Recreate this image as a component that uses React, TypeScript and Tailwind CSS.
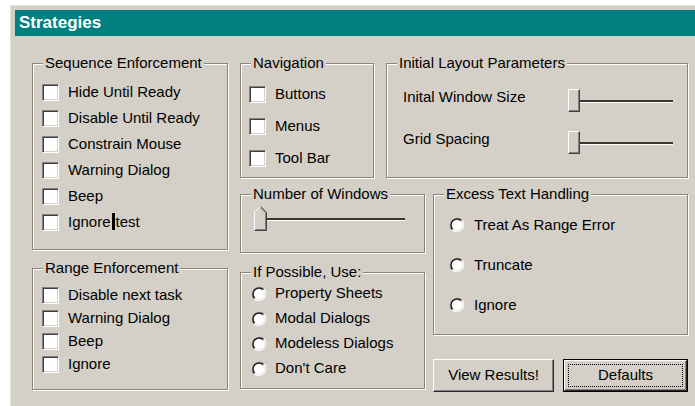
import type { ReactNode } from "react";

type BoxProps = {
  label: string;
  className?: string;
  children?: ReactNode;
};

// Etched group frame with its caption sitting on the top edge.
function GroupBox({ label, className = "", children }: BoxProps) {
  return (
    <div className={`relative border border-[#8c8676] shadow-[inset_1px_1px_0_#fff,1px_1px_0_#fff] ${className}`}>
      <span className="absolute -top-[10px] left-[10px] bg-[#d4d0c8] px-[2px] leading-[18px]">{label}</span>
      {children}
    </div>
  );
}

function CheckBox() {
  return (
    <span className="h-[17px] w-[17px] shrink-0 border border-t-[#808080] border-l-[#808080] border-r-white border-b-white bg-white shadow-[inset_1px_1px_0_#404040,inset_-1px_-1px_0_#d4d0c8]" />
  );
}

function RadioDot() {
  return (
    <svg width="16" height="16" viewBox="0 0 16 16" className="shrink-0">
      <circle cx="8" cy="8" r="6.5" fill="#fff" />
      <path d="M3 13 A7.1 7.1 0 0 1 13 3" fill="none" stroke="#8a8477" strokeWidth="1.2" />
      <path d="M3.8 12.2 A5.9 5.9 0 0 1 12.2 3.8" fill="none" stroke="#1a1a1a" strokeWidth="1.3" />
      <path d="M13 3 A7.1 7.1 0 0 1 3 13" fill="none" stroke="#fff" strokeWidth="1.2" />
      <path d="M12.2 3.8 A5.9 5.9 0 0 1 3.8 12.2" fill="none" stroke="#e4e1da" strokeWidth="1" />
    </svg>
  );
}

function CheckRow({ children, gap = "gap-[9px]", height }: { children: ReactNode; gap?: string; height: string }) {
  return (
    <div className={`flex items-center ${gap} ${height}`}>
      <CheckBox />
      <span>{children}</span>
    </div>
  );
}

function RadioRow({ children, gap = "gap-[8px]", height }: { children: ReactNode; gap?: string; height: string }) {
  return (
    <div className={`flex items-center ${gap} ${height}`}>
      <RadioDot />
      <span>{children}</span>
    </div>
  );
}

function RectThumb() {
  return (
    <span className="h-[23px] w-[12px] shrink-0 border border-t-white border-l-white border-r-[#404040] border-b-[#404040] bg-[#d4d0c8] shadow-[inset_-1px_-1px_0_#808080]" />
  );
}

function PointThumb() {
  return (
    <svg width="13" height="25" viewBox="0 0 13 25" className="shrink-0">
      <polygon points="0.5,6.5 6.5,0.5 12.5,6.5 12.5,24.5 0.5,24.5" fill="#d4d0c8" />
      <path d="M0.5 24 V6.5 L6.5 0.5" fill="none" stroke="#fff" />
      <path d="M6.5 0.5 L12.5 6.5 V24.5 H0.5" fill="none" stroke="#404040" />
      <path d="M6.5 2 L11.5 7 V23.5 H1.5" fill="none" stroke="#808080" />
    </svg>
  );
}

function Track({ width }: { width: string }) {
  return <span className={`h-[2px] ${width} bg-[#3a3730] shadow-[0_1px_0_#fff]`} />;
}

export default function App() {
  return (
    <div className="h-screen w-screen overflow-hidden bg-white pl-[10px] pt-[5px] font-['Liberation_Sans',Arial,sans-serif] text-[15px] text-black">
      <div className="h-[410px] w-[700px] border-l border-t border-[#e4e1da] bg-[#d4d0c8] p-[4px]">
        <div className="flex h-[26px] items-center bg-[#008080] pl-[4px] text-[17px] font-bold text-white">Strategies</div>

        <div className="flex pl-[17px] pt-[27px]">
          {/* left column */}
          <div className="flex w-[196px] flex-col">
            <GroupBox label="Sequence Enforcement" className="h-[187px] pl-[9px] pt-[15px]">
              <CheckRow height="h-[26px]">Hide Until Ready</CheckRow>
              <CheckRow height="h-[26px]">Disable Until Ready</CheckRow>
              <CheckRow height="h-[26px]">Constrain Mouse</CheckRow>
              <CheckRow height="h-[26px]">Warning Dialog</CheckRow>
              <CheckRow height="h-[26px]">Beep</CheckRow>
              <CheckRow height="h-[26px]">
                Ignore<span className="mx-[1px] inline-block h-[17px] w-[3px] bg-black align-[-3px]" />test
              </CheckRow>
            </GroupBox>

            <GroupBox label="Range Enforcement" className="mt-[18px] h-[122px] pl-[9px] pt-[15px]">
              <CheckRow height="h-[23px]">Disable next task</CheckRow>
              <CheckRow height="h-[23px]">Warning Dialog</CheckRow>
              <CheckRow height="h-[23px]">Beep</CheckRow>
              <CheckRow height="h-[23px]">Ignore</CheckRow>
            </GroupBox>
          </div>

          {/* right side */}
          <div className="ml-[12px] flex w-[448px] flex-col">
            <div className="flex">
              <GroupBox label="Navigation" className="h-[115px] w-[134px] pl-[8px] pt-[14px]">
                <CheckRow height="h-[32px]">Buttons</CheckRow>
                <CheckRow height="h-[32px]">Menus</CheckRow>
                <CheckRow height="h-[32px]">Tool Bar</CheckRow>
              </GroupBox>

              <GroupBox label="Initial Layout Parameters" className="ml-[12px] h-[115px] w-[302px] pl-[16px] pt-[25px]">
                <div className="flex h-[23px] items-center">
                  <span className="w-[165px] pb-[7px]">Inital Window Size</span>
                  <RectThumb />
                  <Track width="w-[93px]" />
                </div>
                <div className="mt-[19px] flex h-[23px] items-center">
                  <span className="w-[165px] pb-[7px]">Grid Spacing</span>
                  <RectThumb />
                  <Track width="w-[93px]" />
                </div>
              </GroupBox>
            </div>

            <div className="mt-[16px] flex">
              <div className="flex w-[185px] flex-col">
                <GroupBox label="Number of Windows" className="h-[59px] pl-[13px] pt-[11px]">
                  <div className="flex items-center">
                    <PointThumb />
                    <Track width="w-[138px]" />
                  </div>
                </GroupBox>

                <GroupBox label="If Possible, Use:" className="mt-[19px] h-[117px] pl-[10px] pt-[8px]">
                  <RadioRow height="h-[25px]">Property Sheets</RadioRow>
                  <RadioRow height="h-[25px]">Modal Dialogs</RadioRow>
                  <RadioRow height="h-[25px]">Modeless Dialogs</RadioRow>
                  <RadioRow height="h-[25px]">Don't Care</RadioRow>
                </GroupBox>
              </div>

              <div className="ml-[8px] flex w-[255px] flex-col">
                <GroupBox label="Excess Text Handling" className="h-[141px] pl-[15px] pt-[10px]">
                  <RadioRow height="h-[40px]" gap="gap-[9px]">Treat As Range Error</RadioRow>
                  <RadioRow height="h-[40px]" gap="gap-[9px]">Truncate</RadioRow>
                  <RadioRow height="h-[40px]" gap="gap-[9px]">Ignore</RadioRow>
                </GroupBox>

                <div className="mt-[24px] flex h-[33px]">
                  <button
                    type="button"
                    className="w-[121px] border border-t-white border-l-white border-r-[#2a2a2a] border-b-[#2a2a2a] bg-[#d4d0c8] shadow-[inset_-1px_-1px_0_#808080]"
                  >
                    View Results!
                  </button>
                  <button type="button" className="ml-[9px] flex w-[125px] border border-black bg-[#d4d0c8]">
                    <span className="flex flex-1 border border-t-white border-l-white border-r-[#2a2a2a] border-b-[#2a2a2a] p-[3px] shadow-[inset_-1px_-1px_0_#808080]">
                      <span className="flex flex-1 items-center justify-center border border-dotted border-black">Defaults</span>
                    </span>
                  </button>
                </div>
              </div>
            </div>
          </div>
        </div>
      </div>
    </div>
  );
}
